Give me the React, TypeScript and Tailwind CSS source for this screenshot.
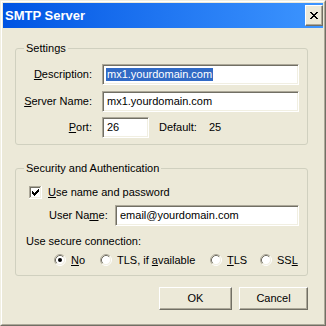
import React from "react";

const F = "font-['Liberation_Sans',Arial,sans-serif]";

function Field({ children, className = "" }: { children?: React.ReactNode; className?: string }) {
  return (
    <div
      className={`h-[21px] bg-white border border-t-[#ACA899] border-l-[#ACA899] border-r-white border-b-white shadow-[inset_1px_1px_0_#716F64,inset_-1px_-1px_0_#F1EFE2] flex items-center text-[11px] leading-[13px] text-black whitespace-nowrap overflow-hidden ${className}`}
    >
      {children}
    </div>
  );
}

const CHECK: [number, number][] = [
  [6, 0],
  [5, 1], [6, 1],
  [0, 2], [4, 2], [5, 2], [6, 2],
  [0, 3], [1, 3], [3, 3], [4, 3], [5, 3],
  [0, 4], [1, 4], [2, 4], [3, 4], [4, 4],
  [1, 5], [2, 5], [3, 5],
  [2, 6],
];

const XPIX: [number, number][] = [
  [0, 0], [1, 0], [6, 0], [7, 0],
  [1, 1], [2, 1], [5, 1], [6, 1],
  [2, 2], [3, 2], [4, 2], [5, 2],
  [3, 3], [4, 3],
  [2, 4], [3, 4], [4, 4], [5, 4],
  [1, 5], [2, 5], [5, 5], [6, 5],
  [0, 6], [1, 6], [6, 6], [7, 6],
];

function Checkbox() {
  return (
    <svg width="13" height="13" viewBox="0 0 13 13" shapeRendering="crispEdges" className="shrink-0">
      <rect x="0" y="0" width="13" height="13" fill="#FFFFFF" />
      <rect x="0" y="0" width="12" height="1" fill="#ACA899" />
      <rect x="0" y="0" width="1" height="12" fill="#ACA899" />
      <rect x="1" y="1" width="11" height="11" fill="#F1EFE2" />
      <rect x="1" y="1" width="10" height="1" fill="#716F64" />
      <rect x="1" y="1" width="1" height="10" fill="#716F64" />
      <rect x="2" y="2" width="9" height="9" fill="#FFFFFF" />
      {CHECK.map(([x, y], i) => (
        <rect key={i} x={3 + x} y={3 + y} width="1" height="1" fill="#000000" />
      ))}
    </svg>
  );
}

function Radio({ checked = false }: { checked?: boolean }) {
  return (
    <svg width="12" height="12" viewBox="0 0 12 12" className="shrink-0">
      <circle cx="6" cy="6" r="4.5" fill="#FFFFFF" />
      <path d="M2.11 9.89 A5.5 5.5 0 0 1 9.89 2.11" fill="none" stroke="#ACA899" strokeWidth="1" />
      <path d="M9.89 2.11 A5.5 5.5 0 0 1 2.11 9.89" fill="none" stroke="#FFFFFF" strokeWidth="1" />
      <path d="M2.82 9.18 A4.5 4.5 0 0 1 9.18 2.82" fill="none" stroke="#716F64" strokeWidth="1" />
      <path d="M9.18 2.82 A4.5 4.5 0 0 1 2.82 9.18" fill="none" stroke="#F1EFE2" strokeWidth="1" />
      {checked && <circle cx="6" cy="6" r="2" fill="#000000" />}
    </svg>
  );
}

function Button({ children, className = "" }: { children: React.ReactNode; className?: string }) {
  return (
    <div
      className={`h-[23px] bg-[#ECE9D8] border border-t-white border-l-white border-r-[#716F64] border-b-[#716F64] shadow-[inset_-1px_-1px_0_#ACA899] flex items-center justify-center text-[11px] leading-[13px] text-black ${className}`}
    >
      {children}
    </div>
  );
}

function Legend({ children }: { children: React.ReactNode }) {
  return <legend className="ml-[8px] px-[2px] text-[11px] leading-[14px] text-black">{children}</legend>;
}

export default function App() {
  return (
    <div className={`w-[326px] h-[326px] ${F} border border-t-[#F1EFE2] border-l-[#F1EFE2] border-r-[#716F64] border-b-[#716F64]`}>
      <div className="w-full h-full border border-t-white border-l-white border-r-[#ACA899] border-b-[#ACA899] bg-[#ECE9D8] p-[1px] flex flex-col">
        {/* Title bar */}
        <div className="h-[25px] shrink-0 bg-linear-to-r from-[#0054E3] to-[#3D95FF] flex items-center justify-between pl-[2px]">
          <span className="text-white font-bold text-[13px] leading-[16px]">SMTP Server</span>
          <div className="w-[18px] h-[21px] bg-[#ECE9D8] border border-t-white border-l-white border-r-[#716F64] border-b-[#716F64] shadow-[inset_-1px_-1px_0_#ACA899] flex items-center justify-center">
            <svg width="8" height="7" viewBox="0 0 8 7" shapeRendering="crispEdges">
              {XPIX.map(([x, y], i) => (
                <rect key={i} x={x} y={y} width="1" height="1" fill="#000000" />
              ))}
            </svg>
          </div>
        </div>

        {/* Settings */}
        <fieldset className="ml-[12px] mt-[13px] w-[293px] border border-[#D0D0BF] rounded-[3px] pt-[9px] pb-[6px]">
          <Legend>Settings</Legend>
          <div className="flex items-center">
            <div className="w-[76px] text-right text-[11px] leading-[13px]">
              <u>D</u>escription:
            </div>
            <Field className="ml-[10px] w-[197px] pl-[3px]">
              <span className="bg-[#316AC5] text-white px-[1px]">mx1.yourdomain.com</span>
            </Field>
          </div>
          <div className="flex items-center mt-[6px]">
            <div className="w-[76px] text-right text-[11px] leading-[13px]">
              <u>S</u>erver Name:
            </div>
            <Field className="ml-[10px] w-[197px] pl-[4px]">mx1.yourdomain.com</Field>
          </div>
          <div className="flex items-center mt-[5px]">
            <div className="w-[76px] text-right text-[11px] leading-[13px]">
              <u>P</u>ort:
            </div>
            <Field className="ml-[10px] w-[47px] pl-[4px]">26</Field>
            <span className="ml-[10px] text-[11px] leading-[13px]">Default:</span>
            <span className="ml-[12px] text-[11px] leading-[13px]">25</span>
          </div>
        </fieldset>

        {/* Security */}
        <fieldset className="ml-[12px] mt-[16px] w-[293px] border border-[#D0D0BF] rounded-[3px] pt-[11px] pb-[9px]">
          <Legend>Security and Authentication</Legend>
          <div className="flex items-center h-[13px] ml-[13px]">
            <Checkbox />
            <span className="ml-[6px] text-[11px] leading-[13px]">
              <u>U</u>se name and password
            </span>
          </div>
          <div className="flex items-center mt-[6px] ml-[33px]">
            <div className="w-[66px] text-[11px] leading-[13px]">
              User Na<u>m</u>e:
            </div>
            <Field className="w-[184px] pl-[4px]">email@yourdomain.com</Field>
          </div>
          <div className="mt-[9px] ml-[10px] text-[11px] leading-[13px]">Use secure connection:</div>
          <div className="mt-[6px] ml-[38px] flex items-center h-[12px] text-[11px] leading-[13px]">
            <div className="w-[46px] flex items-center">
              <Radio checked />
              <span className="ml-[5px]">
                <u>N</u>o
              </span>
            </div>
            <div className="w-[110px] flex items-center">
              <Radio />
              <span className="ml-[5px]">
                TLS, if <u>a</u>vailable
              </span>
            </div>
            <div className="w-[50px] flex items-center">
              <Radio />
              <span className="ml-[5px]">
                <u>T</u>LS
              </span>
            </div>
            <div className="flex items-center">
              <Radio />
              <span className="ml-[5px]">
                SS<u>L</u>
              </span>
            </div>
          </div>
        </fieldset>

        {/* Buttons */}
        <div className="ml-[12px] mt-[11px] w-[293px] flex justify-end gap-[7px]">
          <Button className="w-[73px]">OK</Button>
          <Button className="w-[69px]">Cancel</Button>
        </div>
      </div>
    </div>
  );
}
